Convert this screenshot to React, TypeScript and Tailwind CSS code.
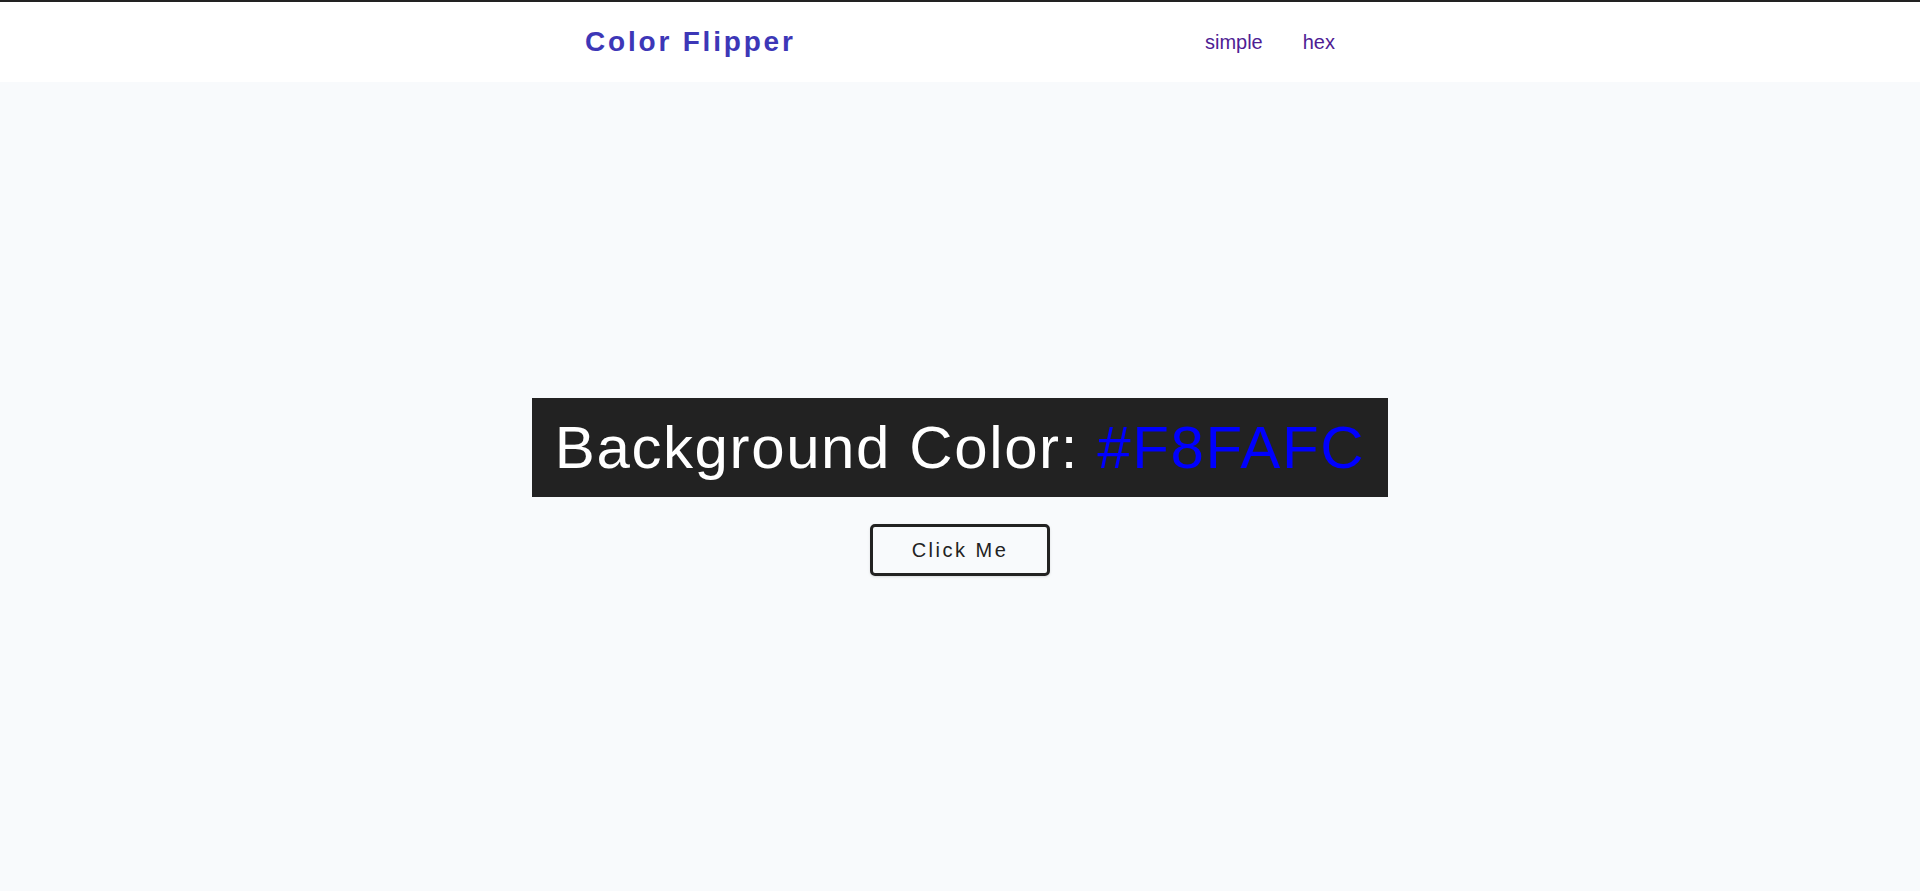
import { useState } from "react";

const navLinks = ["simple", "hex"];

export default function App() {
  const [color] = useState("#F8FAFC");

  return (
    <div
      className="min-h-screen flex flex-col border-t-2 border-[#222222] bg-[#f8fafc]"
      style={{ fontFamily: '"Liberation Sans", Arial, sans-serif' }}
    >
      <nav className="bg-white h-[80px] shrink-0">
        <div className="w-[750px] mx-auto h-full flex items-center justify-between">
          <h4 className="text-[28px] font-bold tracking-widest text-[#3d37b7]">
            Color Flipper
          </h4>
          <ul className="flex items-center gap-10 text-[20px] text-[#4f1d94]">
            {navLinks.map((link) => (
              <li key={link}>
                <a href="#">{link}</a>
              </li>
            ))}
          </ul>
        </div>
      </nav>
      <main className="flex-1 flex flex-col items-center justify-center">
        <h2 className="bg-[#222222] text-white text-[60px] leading-[1.25] tracking-[0.1rem] px-[23px] py-3">
          Background Color: <span className="text-[#0000ff]">{color}</span>
        </h2>
        <button className="mt-[27px] border-[3px] border-[#222222] rounded-[5px] px-[39px] py-[11px] text-[20px] leading-[24px] tracking-[2.5px] text-[#222222] shadow-sm">
          Click Me
        </button>
      </main>
    </div>
  );
}
